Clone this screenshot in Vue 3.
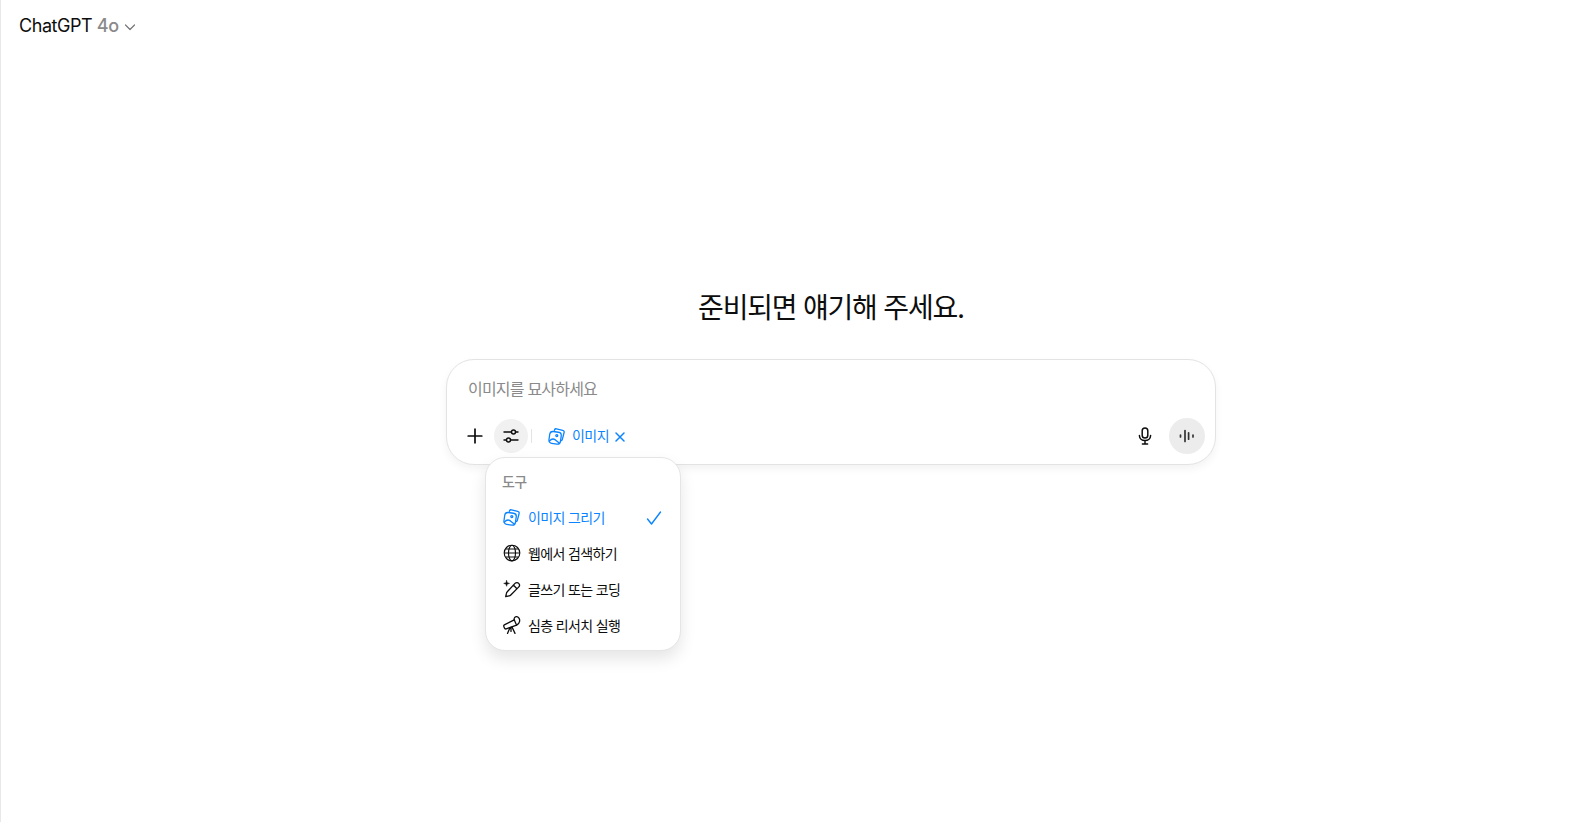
<script setup>
const tools = [
  { key: 'image', label: '이미지 그리기', active: true },
  { key: 'globe', label: '웹에서 검색하기' },
  { key: 'pen', label: '글쓰기 또는 코딩' },
  { key: 'scope', label: '심층 리서치 실행' },
]
</script>

<template>
  <main class="page">
    <header class="top">
      <span class="brand">ChatGPT <span class="ver">4o</span></span>
      <svg class="chev" width="12" height="12" viewBox="0 0 12 12" fill="none" stroke="currentColor" stroke-width="1.2" stroke-linecap="round" stroke-linejoin="round"><path d="M1.500 4l4.500 4.500L10.500 4"/></svg>
    </header>
    <section class="center">
      <h1 class="title">준비되면 얘기해 주세요.</h1>
      <div class="composer">
        <div class="placeholder">이미지를 묘사하세요</div>
        <div class="bar">
          <button class="ic plus">
            <svg width="18" height="18" viewBox="0 0 18 18" fill="none" stroke="currentColor" stroke-width="1.7" stroke-linecap="round"><path d="M9 2.200v13.600M2.200 9h13.600"/></svg>
          </button>
          <button class="ic tools">
            <svg width="18" height="18" viewBox="0 0 18 18" fill="none" stroke="currentColor" stroke-width="1.4" stroke-linecap="round"><path d="M2 5h7.500M13.500 5H16M2 13h2.500M8.500 13H16"/><circle cx="11.500" cy="5" r="2"/><circle cx="6.500" cy="13" r="2"/></svg>
          </button>
          <span class="sep"></span>
          <span class="chip">
            <svg width="20" height="20" viewBox="0 0 20 20" fill="none" stroke="currentColor" stroke-width="1.3" stroke-linecap="round" stroke-linejoin="round"><path d="M7.400 4.400l.2-.6c.3-.8 1-1.200 1.800-1l6.400 1.500c1 .2 1.600 1.200 1.300 2.200l-1.700 6.700c-.2.700-.7 1.200-1.300 1.300"/><rect x="2.300" y="5.800" width="11.600" height="12" rx="3.200" transform="rotate(8 8 11.800)"/><circle cx="9.800" cy="9.600" r="1"/><path d="M2.400 15.200c1.800-2.200 4-2.700 6-1.300l3.800 3.200"/></svg>
            <span>이미지</span>
            <svg class="x" width="12" height="12" viewBox="0 0 12 12" fill="none" stroke="currentColor" stroke-width="1.500" stroke-linecap="round"><path d="M2 2l8 8M10 2l-8 8"/></svg>
          </span>
          <span class="grow"></span>
          <button class="ic mic">
            <svg width="20" height="20" viewBox="0 0 20 20" fill="none" stroke="currentColor" stroke-width="1.500" stroke-linecap="round"><rect x="7.200" y="2" width="5.600" height="10" rx="2.800"/><path d="M4.400 9.600c0 3 2.500 5 5.600 5s5.600-2 5.600-5M10 14.600V18M7.400 18h5.200"/></svg>
          </button>
          <button class="voice">
            <svg width="18" height="18" viewBox="0 0 18 18" fill="none" stroke="currentColor" stroke-width="1.700" stroke-linecap="round"><path d="M2.500 8v2M7 3.500v11M10.600 5.800v6.400M15 8v2"/></svg>
          </button>
        </div>
        <div class="menu">
          <div class="menu-head">도구</div>
          <div v-for="t in tools" :key="t.key" class="row" :class="{ on: t.active }">
            <svg v-if="t.key === 'image'" width="20" height="20" viewBox="0 0 20 20" fill="none" stroke="currentColor" stroke-width="1.3" stroke-linecap="round" stroke-linejoin="round"><path d="M7.400 4.400l.2-.6c.3-.8 1-1.200 1.800-1l6.400 1.500c1 .2 1.600 1.200 1.300 2.200l-1.700 6.700c-.2.700-.7 1.200-1.300 1.300"/><rect x="2.300" y="5.800" width="11.600" height="12" rx="3.200" transform="rotate(8 8 11.800)"/><circle cx="9.800" cy="9.600" r="1"/><path d="M2.400 15.200c1.800-2.200 4-2.700 6-1.300l3.800 3.200"/></svg>
            <svg v-else-if="t.key === 'globe'" width="20" height="20" viewBox="0 0 20 20" fill="none" stroke="currentColor" stroke-width="1.150"><circle cx="10" cy="10" r="7.800"/><ellipse cx="10" cy="10" rx="3.500" ry="7.800"/><path d="M2.200 10h15.600M3.800 6h12.400M3.800 14h12.400"/></svg>
            <svg v-else-if="t.key === 'pen'" width="20" height="20" viewBox="0 0 20 20" fill="none" stroke="currentColor" stroke-width="1.300" stroke-linecap="round" stroke-linejoin="round"><path d="M13 4.400c1.100-1.100 2.800-1.100 3.700 0 1 1 .9 2.700-.1 3.700L8.800 16c-.5.500-1 .8-1.700.9l-3.400.8.800-3.500c.1-.6.400-1.100.8-1.500zM11.400 6l3.500 3.700"/><path d="M4.600 1.500l.7 2.200 2.200.7-2.200.7-.7 2.200-.7-2.200-2.200-.7 2.200-.7z" fill="currentColor" stroke-width=".5"/></svg>
            <svg v-else width="20" height="20" viewBox="0 0 20 20" fill="none" stroke="currentColor" stroke-width="1.300" stroke-linecap="round" stroke-linejoin="round"><path d="M2.300 9.900l9.900-5.100 2.400 5.400-10.400 3.700c-.8.200-1.500-.1-1.800-.8l-.6-1.700c-.2-.6 0-1.200.5-1.500z"/><path d="M12.200 4.800c-.5-1.900 1-3.400 2.700-3.200 1.900.3 3.200 2.700 2.700 4.800-.4 1.800-1.700 3.300-3 3.800"/><path d="M8 12.600L5.500 18.400M10 12l3 6.400M9 12.400v4"/></svg>
            <span class="lbl">{{ t.label }}</span>
            <svg v-if="t.active" class="check" width="18" height="18" viewBox="0 0 18 18" fill="none" stroke="currentColor" stroke-width="1.400" stroke-linecap="round" stroke-linejoin="round"><path d="M2.500 10l4 5L15.500 3"/></svg>
          </div>
        </div>
      </div>
    </section>
  </main>
</template>

<style>
html, body { margin: 0; background: #fff; }
</style>

<style scoped>
.page {
  box-sizing: border-box;
  height: 822px;
  border-left: 1px solid #e8e8e8;
  background: #fff;
  color: #0d0d0d;
  font-family: Inter, "Noto Sans CJK KR", sans-serif;
  overflow: hidden;
}
.top {
  height: 52px;
  padding-left: 18px;
  display: flex;
  align-items: center;
  gap: 5px;
}
.brand { font-size: 18px; line-height: 24px; letter-spacing: -.45px; }
.ver { color: #8a8a8a; font-weight: 500; }
.chev { color: #777; margin-top: 2px; }
.center {
  padding-left: 85px;
  display: flex;
  flex-direction: column;
  align-items: center;
}
.title {
  margin: 236px 0 31px;
  font-size: 28px;
  line-height: 40px;
  font-weight: 400;
  letter-spacing: -1.2px;
}
.composer {
  position: relative;
  box-sizing: border-box;
  width: 770px;
  height: 106px;
  border: 1px solid #e3e3e3;
  border-radius: 28px;
  box-shadow: 0 4px 8px rgba(0,0,0,.05);
  background: #fff;
}
.placeholder {
  padding: 17px 0 0 21px;
  height: 24px;
  font-size: 16px;
  line-height: 24px;
  letter-spacing: -.8px;
  color: #8a8a8a;
}
.bar {
  display: flex;
  align-items: center;
  margin-top: 17px;
  padding: 0 10px 0 11px;
  height: 36px;
}
button { border: 0; background: none; padding: 0; color: #0d0d0d; display: flex; align-items: center; justify-content: center; }
.ic { width: 34px; height: 34px; border-radius: 50%; }
.plus { margin-right: 2px; }
.tools { background: #f1f1f1; }
.sep { width: 1px; height: 14px; background: #e3e3e3; margin: 0 15px 0 3px; }
.chip {
  display: flex;
  align-items: center;
  color: #0a84ff;
  font-size: 14px;
  line-height: 20px;
}
.chip span { margin-left: 5px; letter-spacing: -.55px; }
.chip .x { margin-left: 5px; margin-top: 2px; }
.grow { flex: 1; }
.mic { margin-right: 7px; }
.voice { width: 36px; height: 36px; border-radius: 50%; background: #ececec; color: #333; }
.menu {
  position: absolute;
  left: 38px;
  top: 97px;
  box-sizing: border-box;
  width: 196px;
  height: 194px;
  padding: 9px 8px 8px;
  background: #fff;
  border: 1px solid #e5e5e5;
  border-radius: 20px;
  box-shadow: 0 8px 16px rgba(0,0,0,.1);
}
.menu-head {
  height: 32px;
  padding: 0 8px;
  font-size: 14px;
  line-height: 30px;
  font-weight: 500;
  letter-spacing: -.7px;
  color: #8a8a8a;
}
.row {
  display: flex;
  align-items: center;
  gap: 6px;
  height: 36px;
  padding: 0 8px;
  font-size: 14px;
  letter-spacing: -.65px;
  color: #0d0d0d;
}
.row.on { color: #0a84ff; }
.lbl { flex: 1; }
.check { margin-right: 1px; margin-top: 1px; }
</style>
